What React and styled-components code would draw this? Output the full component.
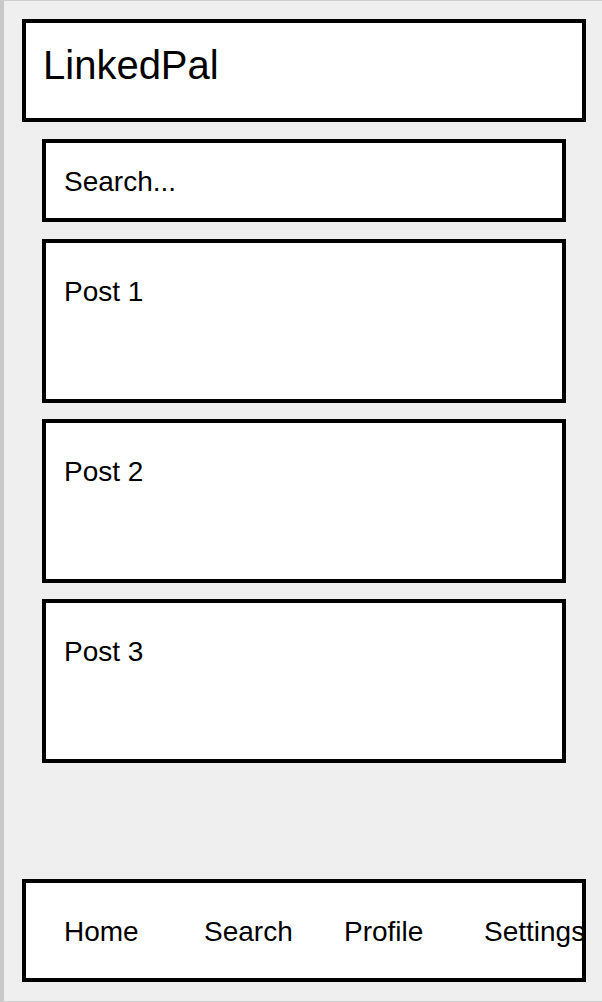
import React from "react";
import styled, { createGlobalStyle } from "styled-components";

const GlobalStyle = createGlobalStyle`
  html, body {
    margin: 0;
    padding: 0;
    background: #efefef;
  }
  * {
    box-sizing: border-box;
  }
`;

const Phone = styled.div`
  width: 602px;
  height: 1002px;
  background: #efefef;
  border-top: 1px solid #cdcdcd;
  border-bottom: 1px solid #cdcdcd;
  border-left: 4px solid #c8c8c8;
  display: flex;
  flex-direction: column;
  font-family: "Liberation Sans", Arial, sans-serif;
  color: #000000;
  overflow: hidden;
`;

const Header = styled.header`
  width: 564px;
  height: 103px;
  margin: 18px 0 0 18px;
  padding: 20px 17px 0;
  background: #ffffff;
  border: 4px solid #000000;
  font-size: 40px;
`;

const Feed = styled.main`
  flex: 1;
  display: flex;
  flex-direction: column;
  gap: 16px;
  margin: 17px 0 0 38px;
  width: 524px;
`;

const SearchBox = styled.div`
  height: 83px;
  padding: 23px 18px 0;
  background: #ffffff;
  border: 4px solid #000000;
  font-size: 28px;
  margin-bottom: 1px;
`;

const PostCard = styled.div`
  height: 164px;
  padding: 33px 18px 0;
  background: #ffffff;
  border: 4px solid #000000;
  font-size: 28px;
`;

const NavBar = styled.nav`
  width: 564px;
  height: 103px;
  margin: 0 0 19px 18px;
  padding-left: 38px;
  background: #ffffff;
  border: 4px solid #000000;
  display: grid;
  grid-template-columns: repeat(4, 140px);
  align-items: center;
  overflow: hidden;
  font-size: 28px;
`;

const NavItem = styled.span`
  white-space: nowrap;
  padding-top: 3px;
`;

const posts = ["Post 1", "Post 2", "Post 3"];
const tabs = ["Home", "Search", "Profile", "Settings"];

const App = () => {
  return (
    <>
      <GlobalStyle />
      <Phone>
        <Header>LinkedPal</Header>
        <Feed>
          <SearchBox>Search...</SearchBox>
          {posts.map((p) => (
            <PostCard key={p}>{p}</PostCard>
          ))}
        </Feed>
        <NavBar>
          {tabs.map((t) => (
            <NavItem key={t}>{t}</NavItem>
          ))}
        </NavBar>
      </Phone>
    </>
  );
};

export default App;
